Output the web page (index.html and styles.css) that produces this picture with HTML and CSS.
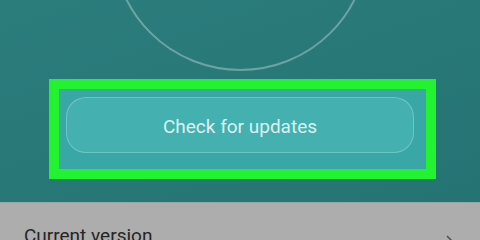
FILE: index.html
```html
<!DOCTYPE html>
<html>
<head>
<meta charset="utf-8">
<link rel="stylesheet" href="styles.css">
</head>
<body>
<div class="screen">
  <section class="hero">
    <div class="ring"></div>
    <div class="highlight">
      <button class="check">Check for updates</button>
    </div>
  </section>
  <section class="list">
    <div class="row">
      <span class="label">Current version</span>
      <svg class="chev" width="10" height="16" viewBox="0 0 10 16"><path d="M2 2 L8 8 L2 14" fill="none" stroke="#555" stroke-width="1.6"/></svg>
    </div>
  </section>
</div>
</body>
</html>
```
FILE: styles.css
```css
html, body {
  margin: 0;
  padding: 0;
  width: 480px;
  height: 240px;
  overflow: hidden;
  font-family: Roboto, "Noto Sans", sans-serif;
}
.screen {
  width: 480px;
  height: 240px;
  display: flex;
  flex-direction: column;
}
.hero {
  height: 202px;
  background: linear-gradient(160deg, #2b7d7c 0%, #287777 60%, #267373 100%);
  display: flex;
  flex-direction: column;
  align-items: flex-start;
  overflow: hidden;
  flex-shrink: 0;
}
.ring {
  width: 253px;
  height: 253px;
  border: 2px solid rgba(190, 215, 212, 0.45);
  border-radius: 50%;
  margin-top: -186px;
  margin-left: 112px;
  flex-shrink: 0;
}
.highlight {
  margin-top: 8px;
  margin-left: 49px;
  width: 348px;
  border: 10px solid #22f230;
  background: #3aa7a7;
  padding: 8px 12px 16px 7px;
}
.check {
  display: block;
  width: 100%;
  height: 56px;
  border-radius: 20px;
  border: 1px solid rgba(200, 235, 232, 0.35);
  background: #44b0af;
  color: #dcf1ef;
  font-family: Roboto, "Noto Sans", sans-serif;
  font-size: 19px;
  padding: 2px 0 0 0;
}
.list {
  flex: 1;
  background: #adadad;
  border-top: 1px solid #9aa5a5;
}
.row {
  display: flex;
  align-items: flex-start;
  justify-content: space-between;
  padding: 22px 25px 0 24px;
}
.label {
  font-size: 19px;
  line-height: 22px;
  color: #252525;
}
.chev {
  margin-top: 9px;
}
```
